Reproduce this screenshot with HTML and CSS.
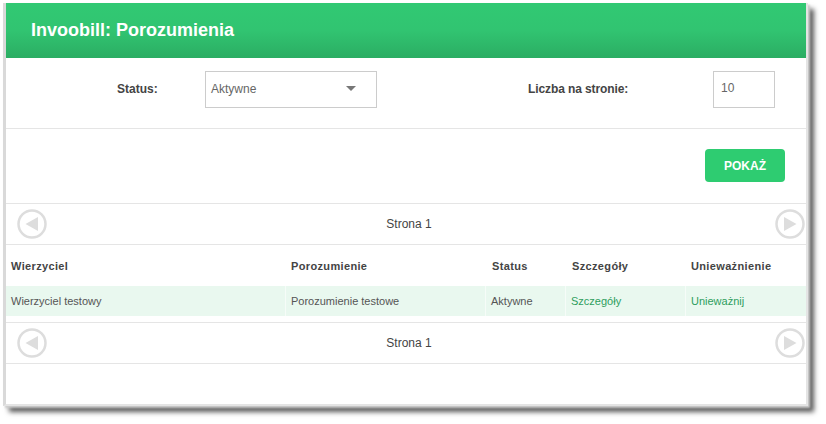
FILE: index.html
```html
<!DOCTYPE html>
<html lang="en">
<head>
<meta charset="UTF-8">
<meta name="viewport" content="width=device-width, initial-scale=1.0">
<title>Invoobill: Porozumienia</title>
<link rel="stylesheet" href="styles.css">
</head>
<body>
<div class="panel">
    <div class="header">Invoobill: Porozumienia</div>
    <div class="filters">
        <label class="label label-status">Status:</label>
        <div class="select">
            <span>Aktywne</span>
            <span class="caret"></span>
        </div>
        <label class="label label-count">Liczba na stronie:</label>
        <div class="count">10</div>
    </div>
    <div class="actions">
        <button class="show">POKAŻ</button>
    </div>
    <div class="pager">
        <svg class="nav" viewBox="0 0 30 30"><circle cx="15" cy="15" r="13.5"/><path d="M21 8v14L8.500 15z"/></svg>
        <span class="page">Strona 1</span>
        <svg class="nav" viewBox="0 0 30 30"><circle cx="15" cy="15" r="13.5"/><path d="M9 8v14l12.500-7z"/></svg>
    </div>
    <table class="list">
        <tr>
            <th class="col-creditor">Wierzyciel</th>
            <th class="col-deal">Porozumienie</th>
            <th class="col-status">Status</th>
            <th class="col-details">Szczegóły</th>
            <th>Unieważnienie</th>
        </tr>
        <tr class="row">
            <td>Wierzyciel testowy</td>
            <td>Porozumienie testowe</td>
            <td>Aktywne</td>
            <td><a href="#">Szczegóły</a></td>
            <td><a href="#">Unieważnij</a></td>
        </tr>
    </table>
    <div class="pager pager-bottom">
        <svg class="nav" viewBox="0 0 30 30"><circle cx="15" cy="15" r="13.5"/><path d="M21 8v14L8.500 15z"/></svg>
        <span class="page">Strona 1</span>
        <svg class="nav" viewBox="0 0 30 30"><circle cx="15" cy="15" r="13.5"/><path d="M9 8v14l12.500-7z"/></svg>
    </div>
</div>
</body>
</html>
```
FILE: styles.css
```css
html {
    height: 424px;
}
body {
    box-sizing: border-box;
    height: 424px;
    margin: 0;
    padding: 3px 0 0 3px;
    overflow: hidden;
    background: #fff;
    font-family: "Liberation Sans", Arial, sans-serif;
    color: #444;
}
.panel {
    width: 800px;
    height: 401px;
    border-left: 3px solid #d9d9d9;
    border-right: 2px solid #e4e4e4;
    border-bottom: 2px solid #e4e4e4;
    background: #fff;
    box-shadow: 2px 2px 2px #ccc, 6px 6px 5px rgba(0,0,0,0.65);
}
.header {
    height: 55px;
    line-height: 55px;
    padding-left: 25px;
    background: linear-gradient(#31c973 0%, #31c471 50%, #2bad63 100%);
    color: #fff;
    font-size: 18px;
    font-weight: bold;
}
.filters {
    display: flex;
    align-items: center;
    box-sizing: border-box;
    height: 71px;
    padding-bottom: 7px;
    border-bottom: 1px solid #e5e5e5;
    font-size: 12px;
}
.label {
    margin-bottom: 2px;
    font-weight: bold;
}
.label-status {
    margin-left: 111px;
    width: 88px;
}
.select {
    display: flex;
    align-items: center;
    justify-content: space-between;
    box-sizing: border-box;
    width: 172px;
    height: 37px;
    padding: 0 20px 2px 5px;
    border: 1px solid #ccc;
    color: #666;
}
.caret {
    border-top: 5px solid #777;
    border-left: 5px solid transparent;
    border-right: 5px solid transparent;
}
.label-count {
    margin-left: 151px;
    width: 185px;
    letter-spacing: -0.1px;
}
.count {
    box-sizing: border-box;
    width: 62px;
    height: 37px;
    line-height: 33px;
    padding-left: 7px;
    border: 1px solid #ccc;
    color: #666;
}
.actions {
    display: flex;
    justify-content: flex-end;
    box-sizing: border-box;
    height: 75px;
    padding: 20px 21px 0 0;
    border-bottom: 1px solid #e5e5e5;
}
.show {
    width: 80px;
    height: 33px;
    padding: 0;
    background: #2ecc71;
    color: #fff;
    border: none;
    border-radius: 4px;
    font-family: inherit;
    font-size: 12px;
    font-weight: bold;
    cursor: pointer;
}
.pager {
    display: flex;
    align-items: center;
    justify-content: space-between;
    box-sizing: border-box;
    height: 41px;
    padding: 0 1px 0 11px;
    border-bottom: 1px solid #e5e5e5;
    font-size: 12px;
    color: #444;
}
.pager-bottom {
    border-top: 1px solid #e5e5e5;
    height: 42px;
}
.page {
    margin-right: 4px;
}
.nav {
    width: 30px;
    height: 30px;
}
.nav circle {
    fill: #fff;
    stroke: #ddd;
    stroke-width: 2.500;
}
.nav path {
    fill: #ddd;
}
.list {
    width: 100%;
    border-spacing: 0;
    table-layout: fixed;
    margin-bottom: 6px;
    font-size: 11px;
}
.list th {
    height: 41px;
    padding: 0 0 0 5px;
    text-align: left;
    letter-spacing: 0.35px;
}
.list td {
    box-sizing: border-box;
    height: 30px;
    padding: 0 0 0 5px;
    background: #e9f8ef;
    border-right: 1px solid #f6fcf8;
    color: #555;
}
.list td:last-child {
    border-right: none;
}
.list a {
    color: #2e9e5e;
    text-decoration: none;
}
.list .col-status,
.list .col-details {
    padding-left: 6px;
}
.col-creditor {
    width: 275px;
}
.col-deal {
    width: 195px;
}
.col-status {
    width: 74px;
}
.col-details {
    width: 114px;
}
```
